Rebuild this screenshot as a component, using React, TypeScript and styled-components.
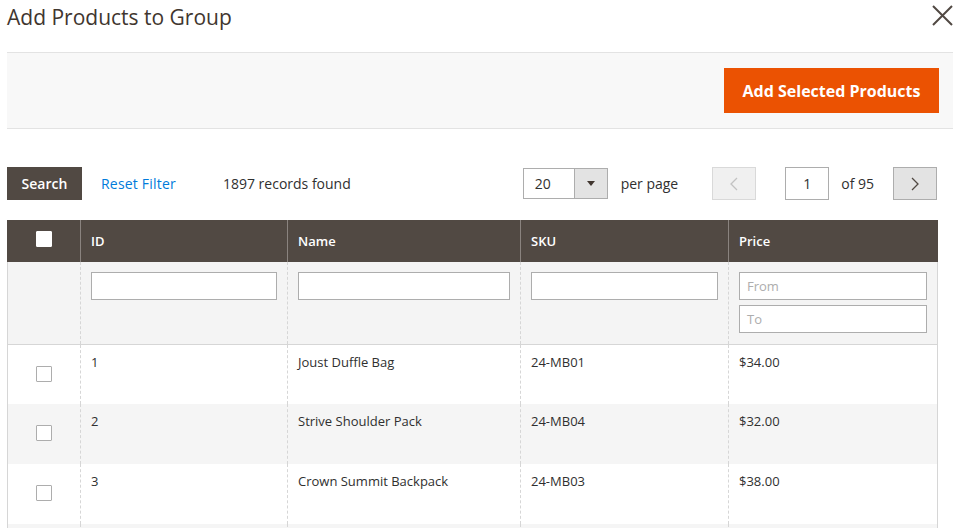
import React from 'react';
import styled, { createGlobalStyle } from 'styled-components';

const Global = createGlobalStyle`
  html, body { margin: 0; padding: 0; background: #fff; }
  body { font-family: "Open Sans", "Liberation Sans", sans-serif; color: #303030; }
  * { box-sizing: border-box; }
`;

const Page = styled.div`
  width: 961px;
  padding-left: 7px;
`;

const Header = styled.header`
  width: 946px;
  height: 52px;
  display: flex;
  justify-content: space-between;
  align-items: flex-start;
`;

const Title = styled.h1`
  margin: 0;
  padding-top: 3px;
  font-size: 21px;
  font-weight: 400;
  line-height: 29px;
  color: #41362f;
`;

const CloseButton = styled.button`
  width: 22px;
  height: 22px;
  margin-top: 4px;
  padding: 0;
  border: 0;
  background: transparent;
  display: flex;
  align-items: center;
  justify-content: center;
`;

const ActionBar = styled.div`
  width: 946px;
  height: 77px;
  background: #f8f8f8;
  border-top: 1px solid #e3e3e3;
  border-bottom: 1px solid #e3e3e3;
  display: flex;
  justify-content: flex-end;
  align-items: center;
  padding-right: 14px;
`;

const PrimaryButton = styled.button`
  height: 45px;
  width: 215px;
  background: #eb5202;
  border: 1px solid #eb5202;
  color: #fff;
  font-family: inherit;
  font-size: 16px;
  font-weight: 700;
  padding: 0;
`;

const Toolbar = styled.div`
  margin-top: 38px;
  width: 930px;
  height: 33px;
  display: flex;
  align-items: center;
  font-size: 14px;
`;

const SearchButton = styled.button`
  width: 75px;
  height: 33px;
  background: #514943;
  border: 1px solid #514943;
  color: #fff;
  font-family: inherit;
  font-size: 14px;
  font-weight: 600;
  padding: 0;
`;

const LinkButton = styled.span`
  color: #007bdb;
  margin-left: 19px;
  font-weight: 400;
  letter-spacing: 0.2px;
`;

const Records = styled.span`
  margin-left: 47px;
  color: #303030;
`;

const Spacer = styled.div`
  flex: 1;
`;

const PerPage = styled.div`
  display: flex;
  width: 85px;
  height: 31px;
  border: 1px solid #adadad;
  background: #fff;
`;

const PerPageValue = styled.div`
  flex: 1;
  padding-left: 11px;
  line-height: 29px;
`;

const PerPageToggle = styled.div`
  width: 33px;
  background: #e3e3e3;
  border-left: 1px solid #adadad;
  display: flex;
  align-items: center;
  justify-content: center;
`;

const Label = styled.span<{ $ml: number; $mr: number }>`
  margin-left: ${p => p.$ml}px;
  margin-right: ${p => p.$mr}px;
`;

const PagerButton = styled.button<{ $disabled?: boolean }>`
  width: 44px;
  height: 33px;
  padding: 0;
  background: ${p => (p.$disabled ? '#f0f0f0' : '#e3e3e3')};
  border: 1px solid ${p => (p.$disabled ? '#d9d9d9' : '#adadad')};
  display: flex;
  align-items: center;
  justify-content: center;
`;

const PageInput = styled.div`
  width: 44px;
  height: 33px;
  margin-left: 29px;
  border: 1px solid #adadad;
  text-align: center;
  line-height: 31px;
`;

const Table = styled.table`
  margin-top: 20px;
  width: 930px;
  border-collapse: collapse;
  table-layout: fixed;
  font-size: 13px;
`;

const Th = styled.th`
  background: #514943;
  color: #fff;
  font-weight: 600;
  text-align: left;
  height: 42px;
  padding: 0 10px;
  border-left: 1px solid #8a837f;
  &:first-child { border-left: 1px solid #514943; text-align: center; }
  &:last-child { border-right: 1px solid #514943; }
`;

const FilterTd = styled.td`
  background: #f4f4f4;
  vertical-align: top;
  height: 82px;
  padding: 10px 10px 0;
  border-left: 1px dashed #d6d6d6;
  border-bottom: 1px solid #d6d6d6;
  &:first-child { border-left: 1px solid #d6d6d6; }
  &:last-child { border-right: 1px solid #d6d6d6; }
`;

const Input = styled.div`
  width: 100%;
  height: 28px;
  border: 1px solid #adadad;
  background: #fff;
  color: #adadad;
  font-size: 13px;
  line-height: 26px;
  padding-left: 7px;
  & + & { margin-top: 5px; }
`;

const Tr = styled.tr<{ $odd: boolean }>`
  background: ${p => (p.$odd ? '#f5f5f5' : '#fff')};
`;

const Td = styled.td`
  height: 60px;
  vertical-align: top;
  padding: 8px 10px 0;
  line-height: 18px;
  border-left: 1px dashed #d6d6d6;
  &:first-child { border-left: 1px solid #d6d6d6; text-align: center; padding: 21px 0 0; }
  &:last-child { border-right: 1px solid #d6d6d6; }
`;

const FillerTd = styled.td`
  height: 20px;
  border-left: 1px dashed #d6d6d6;
  &:first-child { border-left: 1px solid #d6d6d6; }
  &:last-child { border-right: 1px solid #d6d6d6; }
`;

const Checkbox = styled.span<{ $header?: boolean }>`
  display: block;
  margin: 0 auto;
  width: 16px;
  height: 16px;
  background: #fff;
  border: 1px solid ${p => (p.$header ? '#fff' : '#adadad')};
  border-radius: 1px;
  position: relative;
  top: ${p => (p.$header ? '-2px' : '0')};
`;

const rows = [
  { id: 1, name: 'Joust Duffle Bag', sku: '24-MB01', price: '$34.00' },
  { id: 2, name: 'Strive Shoulder Pack', sku: '24-MB04', price: '$32.00' },
  { id: 3, name: 'Crown Summit Backpack', sku: '24-MB03', price: '$38.00' },
];

export default function App() {
  return (
    <Page>
      <Global />
      <Header>
        <Title>Add Products to Group</Title>
        <CloseButton aria-label="Close">
          <svg width="21" height="21" viewBox="0 0 21 21">
            <path d="M1 1 L20 20 M20 1 L1 20" stroke="#514943" strokeWidth="2" fill="none" />
          </svg>
        </CloseButton>
      </Header>
      <ActionBar>
        <PrimaryButton>Add Selected Products</PrimaryButton>
      </ActionBar>
      <Toolbar>
        <SearchButton>Search</SearchButton>
        <LinkButton>Reset Filter</LinkButton>
        <Records>1897 records found</Records>
        <Spacer />
        <PerPage>
          <PerPageValue>20</PerPageValue>
          <PerPageToggle>
            <svg width="8" height="5" viewBox="0 0 8 5">
              <path d="M0 0 L8 0 L4 5 Z" fill="#41362f" />
            </svg>
          </PerPageToggle>
        </PerPage>
        <Label $ml={13} $mr={34}>per page</Label>
        <PagerButton $disabled aria-label="Previous">
          <svg width="8" height="14" viewBox="0 0 8 14">
            <path d="M7 1 L1 7 L7 13" stroke="#c2c2c2" strokeWidth="1.3" fill="none" />
          </svg>
        </PagerButton>
        <PageInput>1</PageInput>
        <Label $ml={12} $mr={19}>of 95</Label>
        <PagerButton aria-label="Next">
          <svg width="8" height="14" viewBox="0 0 8 14">
            <path d="M1 1 L7 7 L1 13" stroke="#514943" strokeWidth="1.3" fill="none" />
          </svg>
        </PagerButton>
      </Toolbar>
      <Table>
        <colgroup>
          <col style={{ width: 73 }} />
          <col style={{ width: 207 }} />
          <col style={{ width: 233 }} />
          <col style={{ width: 208 }} />
          <col style={{ width: 209 }} />
        </colgroup>
        <thead>
          <tr>
            <Th><Checkbox $header /></Th>
            <Th>ID</Th>
            <Th>Name</Th>
            <Th>SKU</Th>
            <Th>Price</Th>
          </tr>
        </thead>
        <tbody>
          <tr>
            <FilterTd />
            <FilterTd><Input /></FilterTd>
            <FilterTd><Input /></FilterTd>
            <FilterTd><Input /></FilterTd>
            <FilterTd>
              <Input>From</Input>
              <Input>To</Input>
            </FilterTd>
          </tr>
          {rows.map((r, i) => (
            <Tr key={r.id} $odd={i % 2 === 1}>
              <Td><Checkbox /></Td>
              <Td>{r.id}</Td>
              <Td>{r.name}</Td>
              <Td>{r.sku}</Td>
              <Td>{r.price}</Td>
            </Tr>
          ))}
          <Tr $odd>
            <FillerTd />
            <FillerTd />
            <FillerTd />
            <FillerTd />
            <FillerTd />
          </Tr>
        </tbody>
      </Table>
    </Page>
  );
}
